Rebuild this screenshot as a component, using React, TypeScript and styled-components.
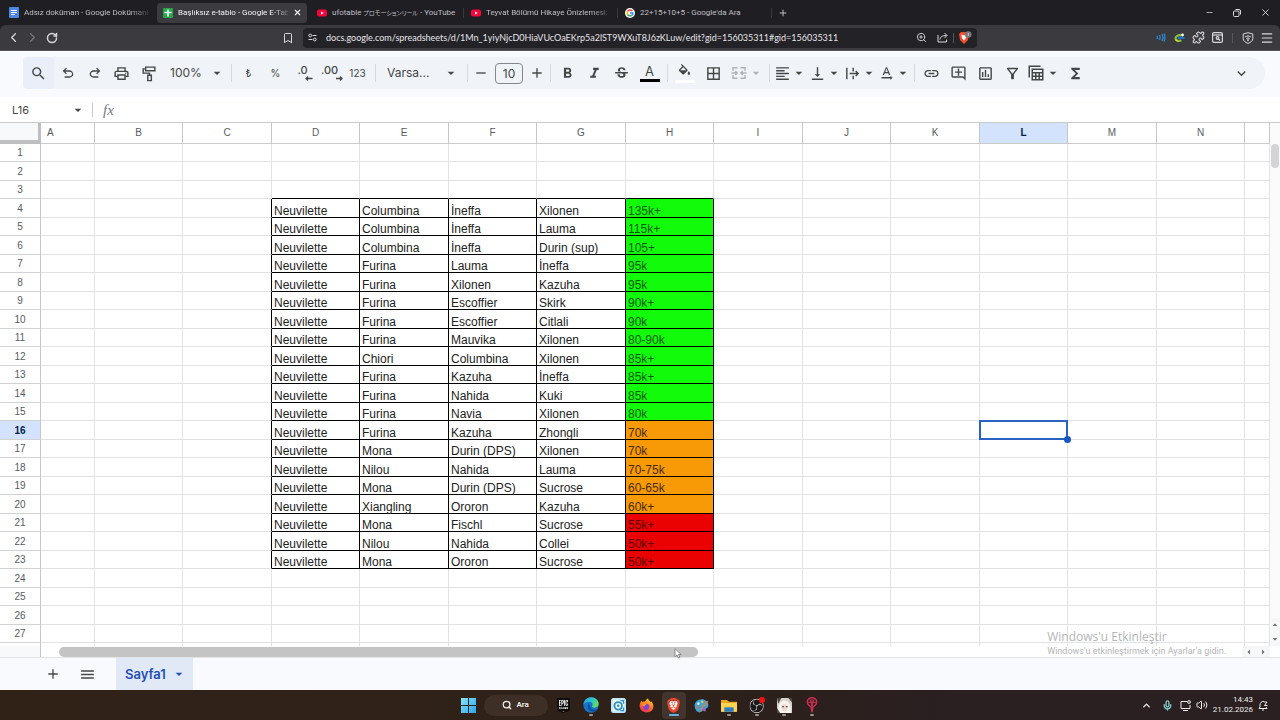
import React from "react";
import styled, { createGlobalStyle, css } from "styled-components";
import {
  MdAdd,
  MdArrowDropDown,
  MdArrowDropUp,
  MdArrowLeft,
  MdArrowRight,
  MdBorderAll,
  MdFormatAlignLeft,
  MdFormatBold,
  MdFormatItalic,
  MdFunctions,
  MdKeyboardArrowDown,
  MdLink,
  MdMenu,
  MdOutlineAddComment,
  MdOutlineFilterAlt,
  MdOutlineInsertChart,
  MdOutlinePrint,
  MdRemove,
  MdSearch,
  MdStrikethroughS,
  MdTextRotationNone,
  MdVerticalAlignBottom,
} from "react-icons/md";
import { SiBrave, SiEpicgames, SiObsstudio } from "react-icons/si";
import {
  Bookmark,
  ChevronLeft,
  ChevronRight,
  ChevronUp,
  Menu,
  Mic,
  Minus,
  Plus,
  Puzzle,
  RotateCw,
  Search,
  Volume2,
  X,
  ZoomIn,
} from "lucide-react";

const uiFont = `Roboto, "Noto Sans CJK JP", sans-serif`;
const docsFont = `Inter, Roboto, sans-serif`;
const cellFont = `"Liberation Sans", Arial, sans-serif`;

const Global = createGlobalStyle`
  * { box-sizing: border-box; }
  body { margin: 0; font-family: ${docsFont}; color: #444746; }
  button, input, select { font: inherit; color: inherit; border: 0; padding: 0; margin: 0; background: none; outline: none; }
  svg { display: block; flex: none; }
`;

const Page = styled.div`
  display: flex;
  flex-direction: column;
  height: 100vh;
  overflow: hidden;
  background: #fff;
`;

/* ---------- browser chrome ---------- */

const TabStrip = styled.header`
  display: flex;
  justify-content: space-between;
  height: 25px;
  padding-left: 3px;
  background: #1f1e23;
  color: #c9c8cc;
  font: 8px/14px ${uiFont};
`;

const TabList = styled.nav`
  display: flex;
  flex: 1;
  align-items: center;
  min-width: 0;
`;

const BrowserTab = styled.a<{ $active?: boolean }>`
  display: flex;
  align-items: center;
  gap: 5px;
  flex: 0 1 150px;
  min-width: 0;
  height: 20px;
  padding: 0 5px 0 6px;
  border-radius: 4px;
  color: ${(p) => (p.$active ? "#f4f3f6" : "#c0bfc4")};
  background: ${(p) => (p.$active ? "#3c3b40" : "transparent")};
  text-decoration: none;
`;

const TabTitle = styled.span<{ $fade?: boolean }>`
  flex: 1;
  min-width: 0;
  overflow: hidden;
  white-space: nowrap;
  ${(p) => p.$fade && css`mask-image: linear-gradient(90deg, #000 85%, #0003);`}
`;

const Kana = styled.span`
  font-size: 6px;
  font-feature-settings: "palt";
`;

const TabDivider = styled.i<{ $hidden?: boolean }>`
  width: 1px;
  height: 10px;
  margin: 0 1px 0 2px;
  background: ${(p) => (p.$hidden ? "transparent" : "#3a393e")};
`;

const ChromeButton = styled.button<{ $w?: number; $dim?: boolean }>`
  display: flex;
  align-items: center;
  justify-content: center;
  flex: none;
  width: ${(p) => p.$w ?? 19}px;
  height: 20px;
  color: ${(p) => (p.$dim ? "#77767b" : "#d9d8dc")};
`;

const WindowControls = styled.div`
  display: flex;
  align-items: center;
  padding-right: 1px;
`;

const BarShell = styled.div`
  background: #1f1e23;
`;

const AddressBar = styled.div`
  display: grid;
  grid-template-columns: 303px 1fr 303px;
  align-items: center;
  height: 26px;
  border-bottom: 1px solid #56555a;
  border-radius: 6px 6px 0 0;
  background: #3b3a3f;
`;

const NavGroup = styled.div`
  display: flex;
  align-items: center;
  padding: 0 6px 0 4px;
`;

const Push = styled.span`
  flex: 1;
`;

const UrlField = styled.label`
  display: flex;
  align-items: center;
  height: 20px;
  padding: 0 2px 0 5px;
  border-radius: 4px;
  background: #232227;
  color: #d9d8dc;
`;

const UrlInput = styled.input`
  flex: 1;
  min-width: 0;
  height: 20px;
  padding-left: 9px;
  font: 9px/14px Lato, Roboto, sans-serif;
  color: #e6e5e9;
`;

const ThinRule = styled.i<{ $m: number }>`
  width: 1px;
  height: 10px;
  margin: 0 ${(p) => p.$m}px;
  background: #57565b;
`;

const ExtensionGroup = styled.div`
  display: flex;
  align-items: center;
  justify-content: flex-end;
  padding-right: 4px;
`;

/* ---------- sheet toolbar ---------- */

const ToolbarBand = styled.div`
  padding: 6px 15px 8px 23px;
  background: #f8fafd;
`;

const Toolbar = styled.div`
  display: flex;
  align-items: center;
  height: 32px;
  border-radius: 16px;
  background: #f0f4f9;
  color: #444746;
  font-size: 12px;
  line-height: 16px;
`;

const ToolButton = styled.button<{ $w?: number; $lit?: boolean; $off?: boolean; $small?: boolean }>`
  display: flex;
  align-items: center;
  justify-content: center;
  flex: none;
  width: ${(p) => p.$w ?? 27}px;
  height: 32px;
  color: ${(p) => (p.$off ? "#b0b3b6" : "#444746")};
  ${(p) => p.$small && css`font-size: 10px;`}
  ${(p) =>
    p.$lit &&
    css`
      border-radius: 4px;
      background: #e9eef8;
    `}
`;

const ToolDivider = styled.i`
  width: 1px;
  height: 18px;
  margin: 0 3px;
  background: #d5d9de;
`;

const SelectBox = styled.label<{ $w: number; $end: number }>`
  display: flex;
  align-items: center;
  flex: none;
  width: ${(p) => p.$w}px;
  padding: 0 ${(p) => p.$end}px 0 8px;
`;

const ToolSelect = styled.select`
  flex: 1;
  min-width: 0;
  appearance: none;
`;

const SizeInput = styled.input`
  width: 28px;
  height: 21px;
  margin: 0 4px;
  border: 1px solid #85888b;
  border-radius: 4px;
  text-align: center;
`;

const DecimalMark = styled.span`
  display: flex;
  flex-direction: column;
  font-size: 11px;
  font-weight: 500;
  line-height: 11px;

  svg {
    align-self: flex-end;
    margin: 0 -5px 0 0;
  }
`;

const ColorMark = styled.span<{ $bar: string }>`
  display: flex;
  justify-content: center;
  width: 20px;
  padding-bottom: 1px;
  border-bottom: 3px solid ${(p) => p.$bar};
  font-size: 13px;
  line-height: 14px;
`;

const CollapseButton = styled(ToolButton)`
  margin: 0 10px 0 auto;
`;

const FormulaBar = styled.div`
  display: flex;
  align-items: center;
  height: 26px;
  border-bottom: 1px solid #c7c9cb;
  font-size: 11px;
  line-height: 14px;
`;

const NameBox = styled.label`
  display: flex;
  align-items: center;
  width: 90px;
  padding: 0 4px 0 12px;
`;

const NameInput = styled.input`
  flex: 1;
  min-width: 0;
`;

const FormulaRule = styled.i`
  width: 1px;
  height: 14px;
  margin: 0 10px 0 2px;
  background: #c7c9cb;
`;

const FormulaLabel = styled.label`
  display: flex;
  flex: 1;
  align-items: center;
  gap: 8px;
  color: #777b80;
  font: italic 15px/16px "Liberation Serif", serif;
`;

const FormulaInput = styled.input`
  flex: 1;
  font: 12px/16px ${cellFont};
`;

/* ---------- grid ---------- */

const SheetArea = styled.main`
  display: flex;
  flex: 1;
  min-height: 0;
`;

const GridViewport = styled.div`
  flex: 1;
  min-width: 0;
  overflow: hidden;
`;

const Grid = styled.table`
  width: 100%;
  table-layout: fixed;
  border-collapse: separate;
  border-spacing: 0;
  font: 12px/12px ${cellFont};
  color: #111;
`;

const Column = styled.col<{ $w?: number }>`
  width: ${(p) => (p.$w ? `${p.$w}px` : "auto")};
`;

const Corner = styled.td`
  padding: 0;
  border-right: 3px solid #bdbfc1;
  border-bottom: 4px solid #bdbfc1;
  background: #f8f9fa;
`;

const ColumnHead = styled.th<{ $selected?: boolean; $first?: boolean }>`
  height: 21px;
  padding: 0 0 0 ${(p) => (p.$first ? 6 : 0)}px;
  border-right: 1px solid #c4c6c8;
  border-bottom: 1px solid #c9cbcd;
  background: ${(p) => (p.$selected ? "#d3e3fd" : "#fff")};
  color: ${(p) => (p.$selected ? "#041e49" : "#575b5f")};
  font-size: 10px;
  font-weight: ${(p) => (p.$selected ? 700 : 400)};
  text-align: ${(p) => (p.$first ? "left" : "center")};
`;

const Row = styled.tr<{ $tall: boolean }>`
  height: ${(p) => (p.$tall ? 19 : 18)}px;
`;

const RowHead = styled.th<{ $selected?: boolean }>`
  padding: 1px 0 0;
  border-right: 1px solid #c4c6c8;
  border-bottom: 1px solid #d0d2d4;
  background: ${(p) => (p.$selected ? "#d3e3fd" : "#fff")};
  color: ${(p) => (p.$selected ? "#041e49" : "#575b5f")};
  font-size: 10px;
  font-weight: ${(p) => (p.$selected ? 700 : 400)};
`;

const Cell = styled.td<{ $fill?: string; $ink?: string; $right?: boolean; $bottom?: boolean; $anchor?: boolean }>`
  position: ${(p) => (p.$anchor ? "relative" : "static")};
  padding: 0 0 0 2px;
  border-right: 1px solid ${(p) => (p.$right ? "#000" : "#e1e2e3")};
  border-bottom: 1px solid ${(p) => (p.$bottom ? "#000" : "#e1e2e3")};
  background: ${(p) => p.$fill ?? "transparent"};
  color: ${(p) => p.$ink ?? "#222"};
  vertical-align: bottom;
  white-space: nowrap;
`;

const Selection = styled.span`
  position: absolute;
  inset: -1px;
  border: 2px solid #2a62c4;

  &::after {
    content: "";
    position: absolute;
    right: -5px;
    bottom: -5px;
    width: 7px;
    height: 7px;
    border-radius: 50%;
    background: #1a56c0;
  }
`;

const VerticalScroll = styled.div`
  display: flex;
  flex-direction: column;
  align-items: center;
  width: 10px;
  background: #fbfbfb;
`;

const VerticalThumb = styled.i`
  width: 8px;
  height: 24px;
  margin: 21px 0 auto;
  border-radius: 4px;
  background: #d3d4d6;
`;

const ScrollButton = styled.button<{ $w: number; $h: number }>`
  display: flex;
  align-items: center;
  justify-content: center;
  width: ${(p) => p.$w}px;
  height: ${(p) => p.$h}px;
  background: #f6f7f8;
  color: #6f7376;
`;

const HorizontalScroll = styled.div`
  position: relative;
  display: flex;
  align-items: center;
  height: 11px;
  padding-right: 10px;
`;

const ScrollGutter = styled.i`
  width: 41px;
  height: 11px;
  border-right: 1px solid #c4c6c8;
  background: #f8f9fa;
`;

const ScrollTrack = styled.div`
  flex: 1;
  padding-left: 18px;
`;

const HorizontalThumb = styled.div`
  position: relative;
  width: 54%;
  height: 10px;
  border-radius: 5px;
  background: #c4c4c4;
`;

const Pointer = styled.svg`
  position: absolute;
  right: 16px;
  top: 1px;
`;

const Watermark = styled.aside`
  position: absolute;
  right: 54px;
  bottom: 0;
  color: #b4b5b7;
  font: 9px/12px ${uiFont};
  white-space: nowrap;
  pointer-events: none;
`;

const WatermarkTitle = styled.p`
  margin: 0;
  font: 12px/17px "Open Sans", sans-serif;
`;

const WatermarkText = styled.p`
  margin: 0;
`;

/* ---------- sheet tabs ---------- */

const SheetBar = styled.footer`
  display: flex;
  align-items: center;
  height: 33px;
  padding-left: 36px;
  border-top: 1px solid #e2e4e7;
  background: #f8fafd;
`;

const SheetBarButton = styled.button`
  display: flex;
  align-items: center;
  justify-content: center;
  width: 34px;
  height: 32px;
  color: #444746;
`;

const SheetTab = styled.button`
  display: flex;
  align-items: center;
  gap: 5px;
  height: 32px;
  margin-left: 12px;
  padding: 0 6px 0 9px;
  background: #e1e9f7;
  color: #2150b4;
  font-size: 13px;
  font-weight: 600;
`;

/* ---------- taskbar ---------- */

const Taskbar = styled.div`
  display: grid;
  grid-template-columns: 1fr 368px 1fr;
  align-items: center;
  height: 30px;
  background: linear-gradient(90deg, #302217, #2e2119 50%, #2a1f21 75%);
  color: #f1eeec;
  font: 8px/10px ${uiFont};
`;

const AppRow = styled.nav`
  grid-column: 2;
  display: flex;
  justify-content: space-between;
`;

const AppButton = styled.button<{ $mark?: "open" | "active" }>`
  display: flex;
  flex-direction: column;
  align-items: center;
  justify-content: center;
  gap: 1px;
  width: 24px;
  height: 27px;
  padding-top: 3px;
  border-radius: 4px;
  background: ${(p) => (p.$mark === "active" ? "#43352e" : "transparent")};

  &::after {
    content: "";
    width: ${(p) => (p.$mark === "active" ? 10 : 4)}px;
    height: 2px;
    border-radius: 1px;
    background: ${(p) => (p.$mark === "active" ? "#62b4e8" : p.$mark === "open" ? "#9c928c" : "transparent")};
  }
`;

const SearchPill = styled.button`
  display: flex;
  align-items: center;
  justify-content: center;
  gap: 4px;
  width: 64px;
  height: 21px;
  margin-top: 3px;
  border-radius: 11px;
  background: #3d2f26;
  font-weight: 600;
`;

const Tray = styled.div`
  display: flex;
  align-items: center;
  justify-content: flex-end;
  padding-right: 8px;
`;

const TrayButton = styled.button<{ $w: number; $tint?: string }>`
  display: flex;
  align-items: center;
  justify-content: center;
  width: ${(p) => p.$w}px;
  height: 24px;
  color: ${(p) => p.$tint ?? "#efecec"};
`;

const Clock = styled.div`
  display: flex;
  flex-direction: column;
  width: 44px;
  text-align: right;
  white-space: nowrap;
`;

/* ---------- drawings ---------- */

const SymbolIcon = ({ d, size = 16 }: { d: string; size?: number }) => (
  <svg width={size} height={size} viewBox="0 -960 960 960" fill="currentColor">
    <path d={d} />
  </svg>
);

const undoPath =
  "M280-200v-80h284q63 0 109.5-40T720-420q0-60-46.5-100T564-560H312l104 104-56 56-200-200 200-200 56 56-104 104h252q97 0 157.5 63T800-420q0 94-69.5 157T564-200H280Z";
const redoPath =
  "M396-200q-97 0-166.5-63T160-420q0-94 69.5-157T396-640h252L544-744l56-56 200 200-200 200-56-56 104-104H396q-63 0-109.5 40T240-420q0 60 46.5 100T396-280h284v80H396Z";

const LineIcon = ({ size = 17, w = 2, children }: { size?: number; w?: number; children: React.ReactNode }) => (
  <svg width={size} height={size} viewBox="0 0 24 24" fill="none" stroke="currentColor" strokeWidth={w}>
    {children}
  </svg>
);

const RollerIcon = () => (
  <LineIcon>
    <path d="M8 3h13v5H8zM8 5.500H4.500V11.500H13.500V14.500M11 14.500h5V22h-5z" />
  </LineIcon>
);

const FillIcon = () => (
  <svg width="15" height="15" viewBox="0 0 24 24" fill="currentColor">
    <path d="M16.560 8.940 7.620 0 6.210 1.410l2.380 2.380-5.150 5.150a1.490 1.490 0 0 0 0 2.120l5.500 5.500c.29.290.680.440 1.060.440s.770-.150 1.060-.440l5.500-5.500c.590-.580.590-1.530 0-2.120zM5.210 10 10 5.210 14.790 10zM19 11.500s-2 2.170-2 3.500c0 1.100.9 2 2 2s2-.9 2-2c0-1.330-2-3.500-2-3.500z" />
  </svg>
);

const MergeIcon = () => (
  <LineIcon size={18}>
    <path d="M10 5H4v4M4 15v4h6M14 5h6v4M20 15v4h-6M2 12h7M22 12h-7M7 9.500 9.500 12 7 14.500M17 9.500 14.500 12 17 14.500" />
  </LineIcon>
);

const WrapIcon = () => (
  <LineIcon>
    <path d="M4 4v16M13 4v5M13 15v5M8 12h12M16.500 8.500 20 12 16.500 15.500" />
  </LineIcon>
);

const TableViewsIcon = () => (
  <LineIcon size={18}>
    <path d="M3 18V3h15M7 7h14v14H7zM7 11.500h14M7 16.200h14M11.700 11.500V21M16.300 11.500V21" />
  </LineIcon>
);

const SmallArrow = ({ flip }: { flip?: boolean }) => (
  <svg width="8" height="5" viewBox="0 0 8 5" fill="none" stroke="currentColor" strokeWidth="1.300">
    <path d={flip ? "M1 2.500h6M5 .5 7 2.500 5 4.500" : "M7.500 2.500H1M3 .5 1 2.500 3 4.500"} />
  </svg>
);

const DocsFavicon = () => (
  <svg width="10" height="11" viewBox="0 0 10 11">
    <rect width="10" height="11" rx="1" fill="#4a86e8" />
    <path d="M2 3.500h6M2 5.500h6M2 7.500h4" stroke="#fff" />
  </svg>
);

const SheetsFavicon = () => (
  <svg width="10" height="10" viewBox="0 0 10 10">
    <rect width="10" height="10" rx="1" fill="#2ba24c" />
    <path d="M5 1.500v7M1.500 4.500h7" stroke="#fff" strokeWidth="1.500" />
  </svg>
);

const YoutubeFavicon = () => (
  <svg width="10" height="10" viewBox="0 0 10 10">
    <rect y="1.500" width="10" height="7" rx="2" fill="#f4063d" />
    <path d="M4 3.500 6.800 5 4 6.500z" fill="#fff" />
  </svg>
);

const GoogleFavicon = () => (
  <svg width="10" height="10" viewBox="0 0 20 20">
    <circle cx="10" cy="10" r="10" fill="#fff" />
    <g fill="none" strokeWidth="3">
      <path d="M14.200 6A5.800 5.800 0 0 0 5 7" stroke="#ea4335" />
      <path d="M5 7a5.800 5.800 0 0 0 0 6" stroke="#fbbc05" />
      <path d="M5 13a5.800 5.800 0 0 0 8.500 1.600" stroke="#34a853" />
      <path d="M13.500 14.600A5.800 5.800 0 0 0 15.800 10H10" stroke="#4285f4" />
    </g>
  </svg>
);

const TuneIcon = () => (
  <svg width="9" height="9" viewBox="0 0 9 9" fill="none" stroke="currentColor">
    <circle cx="2.200" cy="2.500" r="1.400" />
    <circle cx="6.800" cy="6.500" r="1.400" />
    <path d="M4.500 2.500H8.500M.5 6.500h4" />
  </svg>
);

const RestoreIcon = () => (
  <svg width="8" height="8" viewBox="0 0 8 8" fill="none" stroke="currentColor">
    <rect x=".5" y="2" width="5.500" height="5.500" rx="1" />
    <path d="M2.500.5H6A1.500 1.500 0 0 1 7.500 2v3.500" />
  </svg>
);

const ShareIcon = () => (
  <svg width="11" height="11" viewBox="0 0 11 11" fill="none" stroke="currentColor">
    <path d="M1 3v7h8.500V7.500M3 7.500C3.300 5 5 3.500 9.500 3.500M7.500 1l2.500 2.500L7.500 6" />
  </svg>
);

const BraveMark = ({ size }: { size: number }) => (
  <svg width={size} height={size} viewBox="0 0 24 24">
    <path d="M6 5h12l1 6-3 6-4 4-4-4-3-6z" fill="#fff" />
    <SiBrave size={24} color="#f1452a" />
  </svg>
);

const BraveShieldIcon = () => (
  <svg width="14" height="13" viewBox="0 0 14 13">
    <path d="M3 1h6l2 2-1 6-4 4-4-4-1-6z" fill="#f0502f" />
    <path d="M3.500 3.500 6 4.500l2.500-1L8 7 6 9.500 4 7z" fill="#fff" />
    <circle cx="10.300" cy="3.500" r="3.300" fill="#77767c" />
    <path d="M10.300 2v3" stroke="#ddd" strokeWidth=".8" />
  </svg>
);

const WavesIcon = () => (
  <svg width="10" height="9" viewBox="0 0 10 9" fill="none" stroke="#2b8fe0" strokeWidth="1.200">
    <path d="M1 3q.7 1.500 0 3M3.500 2q1.300 2.500 0 5M6 1q2 3.500 0 7M8 .5q2 4 0 8" />
  </svg>
);

const DownloadExtIcon = () => (
  <svg width="11" height="10" viewBox="0 0 11 10">
    <path d="M7.500 2.500C4 1.500 1.500 3.500 1.500 5.500S4 8.500 7.500 7.500" fill="none" stroke="#7cc43a" strokeWidth="2.200" />
    <path d="M4 5h6.500" stroke="#1f6fd0" strokeWidth="2" />
    <circle cx="8.500" cy="2" r="1.400" fill="#fff" />
    <path d="M1.500 6.500 4 8.500" stroke="#f2c522" strokeWidth="1.500" />
  </svg>
);

const WalletIcon = () => (
  <svg width="11" height="11" viewBox="0 0 11 11" fill="none" stroke="currentColor" strokeWidth="1.200">
    <rect x=".6" y=".6" width="9.800" height="9.800" rx="1.500" />
    <path d="M.6 3h9.800" />
    <circle cx="5.500" cy="6" r="1.300" />
    <path d="M6.500 7 8 8.500" />
  </svg>
);

const ShieldWifiIcon = () => (
  <svg width="12" height="12" viewBox="0 0 12 12" fill="none" stroke="currentColor">
    <path d="M6 .7 10.800 2v4.500C10.800 9 8.500 10.500 6 11.400 3.500 10.500 1.200 9 1.200 6.500V2z" />
    <path d="M3.200 4.800Q6 2.800 8.800 4.800M4.300 6.500Q6 5.200 7.700 6.500" />
    <circle cx="6" cy="8" r=".6" fill="currentColor" />
  </svg>
);

const WindowsIcon = () => (
  <svg width="15" height="15" viewBox="0 0 15 15">
    <defs>
      <linearGradient id="win" x1="0" y1="0" x2="1" y2="1">
        <stop stopColor="#8be3fb" />
        <stop offset="1" stopColor="#24a5ea" />
      </linearGradient>
    </defs>
    <path d="M0 0h7v7H0zM8 0h7v7H8zM0 8h7v7H0zM8 8h7v7H8z" fill="url(#win)" />
  </svg>
);

const EpicIcon = () => (
  <svg width="15" height="15" viewBox="0 0 24 24">
    <path d="M4 2h16v15l-8 5-8-5z" fill="#fff" />
    <SiEpicgames size={24} color="#0e0d0d" />
  </svg>
);

const EdgeIcon = () => (
  <svg width="16" height="16" viewBox="0 0 24 24">
    <defs>
      <linearGradient id="edgeTop" x1="0" y1="0" x2="1" y2=".4">
        <stop stopColor="#2aa6e8" />
        <stop offset=".6" stopColor="#2fc5c8" />
        <stop offset="1" stopColor="#63dd5a" />
      </linearGradient>
    </defs>
    <circle cx="12" cy="12" r="11.500" fill="#1673c9" />
    <path d="M.7 11.500C1.500 4.800 6.300.5 12.300.5 19 .5 23.500 5.500 23.500 10.200c0 3.600-2.800 5.800-6 5.800-2.300 0-4-.8-4-1.800 0-.8 1-1.200 1-3 0-2.200-2.500-4-5.500-4-4 0-7 2-8.300 4.300z" fill="url(#edgeTop)" />
    <path d="M9 10c-3 2-3 9 3 11.500 4 1.500 8-.5 10-4-5 3-12 1-12-5z" fill="#0c4f9e" />
  </svg>
);

const GearFaceIcon = () => (
  <svg width="15" height="15" viewBox="0 0 24 24">
    <rect width="24" height="24" rx="4" fill="#bfe6fa" />
    <path d="M3 3h18v18H3z" fill="#f2f8dc" />
    <circle cx="11.500" cy="12.500" r="6" fill="none" stroke="#2a8fd6" strokeWidth="3" />
    <circle cx="11.500" cy="12.500" r="2" fill="#2a8fd6" />
    <path d="M15 4h5v5M20 15v5h-5" fill="none" stroke="#2a8fd6" strokeWidth="2" />
  </svg>
);

const FirefoxIcon = () => (
  <svg width="15" height="15" viewBox="0 0 24 24">
    <defs>
      <linearGradient id="fox" x1=".8" y1="0" x2=".3" y2="1">
        <stop stopColor="#ffd43a" />
        <stop offset=".5" stopColor="#ff7a1f" />
        <stop offset="1" stopColor="#f0304e" />
      </linearGradient>
    </defs>
    <path d="M12 23C5.500 23 1 18.500 1 12.500 1 9 2.500 6 4.500 4c0 1 .5 2 1 2.500C7 5.500 8.500 5.500 9.500 6 11 3 13 1.500 14.500.5c0 3 2.500 4 4 6L19.500 5C22 7.500 23 10 23 13c0 5.500-4.500 10-11 10z" fill="url(#fox)" />
    <circle cx="11.500" cy="14" r="5" fill="#8042d8" />
    <path d="M5 9c3-1 5 0 7 1.500-2 .5-3 1.500-3 3-2 0-4-2-4-4.500z" fill="#ff9a25" />
  </svg>
);

const PaintIcon = () => (
  <svg width="15" height="15" viewBox="0 0 24 24">
    <path d="M12 2C6 2 1 6.500 1 12.500S5 23 9 23c3 0 2-4 5-5 4-1 9-1 9-7 0-5-5-9-11-9z" fill="#3ba5d8" />
    <circle cx="7" cy="9" r="2" fill="#f4f4f4" />
    <circle cx="13" cy="6" r="2" fill="#f6c945" />
    <circle cx="6" cy="15" r="2" fill="#e7633c" />
    <path d="M13 12 21 4l2 2-7 9-3 7-3-1z" fill="#b98a62" />
    <path d="M15 14c4 1 5 4 3 8l-5-3z" fill="#8b6fd0" />
  </svg>
);

const FolderIcon = () => (
  <svg width="16" height="15" viewBox="0 0 24 24" preserveAspectRatio="none">
    <path d="M0 3h9l3 3h12v16H0z" fill="#e9a820" />
    <path d="M0 8h24v14H0z" fill="#fcd354" />
    <path d="M5 15h14v7H5z" fill="#2b7cc4" />
  </svg>
);

const ObsIcon = () => (
  <svg width="16" height="16" viewBox="0 0 26 26">
    <circle cx="12" cy="14" r="11" fill="#1c1a1b" />
    <SiObsstudio size={23} x={1} y={3} color="#dedbda" />
    <circle cx="21" cy="5" r="5" fill="#f01313" />
  </svg>
);

const PortraitIcon = () => (
  <svg width="15" height="15" viewBox="0 0 24 24">
    <rect width="24" height="24" fill="#d8d2cc" />
    <path d="M2 24C1 12 5 4 12 4s11 8 10 20z" fill="#f7f3ef" />
    <path d="M7 12q5-4 10 0l-1 7q-4 4-8 0z" fill="#efd9cc" />
    <path d="M8 14h3M14 14h3" stroke="#3c3634" strokeWidth="1.800" />
    <path d="M0 24V16l5 8zM18 0h6v7zM0 0h7L2 9z" fill="#4a433f" />
  </svg>
);

const PinIcon = () => (
  <svg width="16" height="16" viewBox="0 0 24 24" fill="none" stroke="#d22f55" strokeWidth="2">
    <path d="M12 23 10.500 15C6 12 4.500 9 5 6c1-3 4-5 7-5s6 2 7 5c.5 3-1 6-5.500 9z" />
    <path d="M12 1v20M8.500 3 13 14M15.500 3 11 14M5 8h14" strokeWidth="1.400" />
  </svg>
);

const DisplayIcon = () => (
  <svg width="11" height="11" viewBox="0 0 11 11" fill="none" stroke="currentColor">
    <path d="M7 1.500H1v7h9V5M3 10.500h5" />
    <circle cx="9" cy="2" r="1.400" />
  </svg>
);

const BellIcon = () => (
  <svg width="10" height="11" viewBox="0 0 10 11" fill="none" stroke="currentColor">
    <path d="M6 1.500C3.500 1 2 3 2 5v2L1 8.500h8L8 7M4 10h2" />
    <path d="M6 2h3L6.500 5.500H9.500" />
  </svg>
);

/* ---------- data ---------- */

const columns: { name: string; width?: number }[] = [
  { name: "A", width: 54 },
  { name: "B", width: 88 },
  { name: "C", width: 89 },
  { name: "D", width: 88 },
  { name: "E", width: 89 },
  { name: "F", width: 88 },
  { name: "G", width: 89 },
  { name: "H", width: 88 },
  { name: "I", width: 89 },
  { name: "J", width: 88 },
  { name: "K", width: 89 },
  { name: "L", width: 88 },
  { name: "M", width: 89 },
  { name: "N", width: 88 },
  { name: "" },
];

const firstDataRow = 4;
const teams = `Columbina|İneffa|Xilonen|135k+
Columbina|İneffa|Lauma|115k+
Columbina|İneffa|Durin (sup)|105+
Furina|Lauma|İneffa|95k
Furina|Xilonen|Kazuha|95k
Furina|Escoffier|Skirk|90k+
Furina|Escoffier|Citlali|90k
Furina|Mauvika|Xilonen|80-90k
Chiori|Columbina|Xilonen|85k+
Furina|Kazuha|İneffa|85k+
Furina|Nahida|Kuki|85k
Furina|Navia|Xilonen|80k
Furina|Kazuha|Zhongli|70k
Mona|Durin (DPS)|Xilonen|70k
Nilou|Nahida|Lauma|70-75k
Mona|Durin (DPS)|Sucrose|60-65k
Xiangling|Ororon|Kazuha|60k+
Mona|Fischl|Sucrose|55k+
Nilou|Nahida|Collei|50k+
Mona|Ororon|Sucrose|50k+`
  .split("\n")
  .map((line) => ["Neuvilette", ...line.split("|")]);

const tierOf = (i: number) =>
  i < 12
    ? { fill: "#12fb0a", ink: "#0b5a08" }
    : i < 17
      ? { fill: "#f79a06", ink: "#4a2c02" }
      : { fill: "#ea0202", ink: "#600202" };

const rowNumbers = Array.from({ length: 27 }, (_, i) => i + 1);

const SheetRow = ({ n }: { n: number }) => {
  const index = n - firstDataRow;
  const team = teams[index];
  return (
    <Row $tall={n % 2 === 0}>
      <RowHead scope="row" $selected={n === 16}>
        {n}
      </RowHead>
      {columns.map((c, x) => {
        const inBlock = x >= 3 && x <= 7;
        const tier = team && x === 7 ? tierOf(index) : undefined;
        const selected = n === 16 && c.name === "L";
        return (
          <Cell
            key={x}
            $fill={tier?.fill}
            $ink={tier?.ink}
            $right={!!team && x >= 2 && x <= 7}
            $bottom={inBlock && (!!team || n === firstDataRow - 1)}
            $anchor={selected}
          >
            {team && inBlock ? team[x - 3] : null}
            {selected ? <Selection /> : null}
          </Cell>
        );
      })}
    </Row>
  );
};

const Caret = () => <MdArrowDropDown size={16} />;

const DropTool = ({ label, off, w = 35, children }: { label: string; off?: boolean; w?: number; children: React.ReactNode }) => (
  <ToolButton $w={w} $off={off} aria-label={label}>
    {children}
    <MdArrowDropDown size={16} />
  </ToolButton>
);

export default function App() {
  return (
    <Page>
      <Global />
      <TabStrip>
        <TabList>
          <BrowserTab href="#docs">
            <DocsFavicon />
            <TabTitle $fade>Adsız doküman - Google Dokümanla</TabTitle>
          </BrowserTab>
          <TabDivider $hidden />
          <BrowserTab href="#sheet" $active>
            <SheetsFavicon />
            <TabTitle $fade>Başlıksız e-tablo - Google E-Tabl</TabTitle>
            <X size={9} strokeWidth={3} />
          </BrowserTab>
          <TabDivider $hidden />
          <BrowserTab href="#reel">
            <YoutubeFavicon />
            <TabTitle>
              ufotable <Kana lang="ja">プロモーションリール</Kana> - YouTube
            </TabTitle>
          </BrowserTab>
          <TabDivider />
          <BrowserTab href="#teyvat">
            <YoutubeFavicon />
            <TabTitle $fade>Teyvat Bölümü Hikaye Önizlemesi: Ay</TabTitle>
          </BrowserTab>
          <TabDivider />
          <BrowserTab href="#search">
            <GoogleFavicon />
            <TabTitle>22+15+10+5 - Google'da Ara</TabTitle>
          </BrowserTab>
          <TabDivider />
          <ChromeButton aria-label="Yeni sekme">
            <Plus size={10} />
          </ChromeButton>
        </TabList>
        <WindowControls>
          <ChromeButton $w={28} aria-label="Simge durumuna küçült">
            <Minus size={9} />
          </ChromeButton>
          <ChromeButton $w={28} aria-label="Geri yükle">
            <RestoreIcon />
          </ChromeButton>
          <ChromeButton $w={28} aria-label="Kapat">
            <X size={11} />
          </ChromeButton>
        </WindowControls>
      </TabStrip>

      <BarShell>
        <AddressBar>
          <NavGroup>
            <ChromeButton aria-label="Geri">
              <ChevronLeft size={15} />
            </ChromeButton>
            <ChromeButton $dim aria-label="İleri">
              <ChevronRight size={15} />
            </ChromeButton>
            <ChromeButton aria-label="Yenile">
              <RotateCw size={12} strokeWidth={3} />
            </ChromeButton>
            <Push />
            <ChromeButton aria-label="Yer işareti">
              <Bookmark size={12} />
            </ChromeButton>
          </NavGroup>
          <UrlField>
            <TuneIcon />
            <UrlInput
              aria-label="Adres"
              defaultValue="docs.google.com/spreadsheets/d/1Mn_1yiyNjcD0HiaVUcOaEKrp5a2lST9WXuT8J6zKLuw/edit?gid=156035311#gid=156035311"
            />
            <ChromeButton $w={22} aria-label="Yakınlaştır">
              <ZoomIn size={11} />
            </ChromeButton>
            <ChromeButton $w={20} aria-label="Paylaş">
              <ShareIcon />
            </ChromeButton>
            <ThinRule $m={1} />
            <ChromeButton $w={20} aria-label="Brave Shields">
              <BraveShieldIcon />
            </ChromeButton>
          </UrlField>
          <ExtensionGroup>
            <ChromeButton aria-label="Ses">
              <WavesIcon />
            </ChromeButton>
            <ChromeButton aria-label="İndirme yöneticisi">
              <DownloadExtIcon />
            </ChromeButton>
            <ChromeButton aria-label="Uzantılar">
              <Puzzle size={13} />
            </ChromeButton>
            <ChromeButton aria-label="Cüzdan">
              <WalletIcon />
            </ChromeButton>
            <ThinRule $m={5} />
            <ChromeButton aria-label="VPN">
              <ShieldWifiIcon />
            </ChromeButton>
            <ChromeButton aria-label="Menü">
              <Menu size={14} />
            </ChromeButton>
          </ExtensionGroup>
        </AddressBar>
      </BarShell>

      <ToolbarBand>
        <Toolbar role="toolbar">
          <ToolButton $w={31} $lit aria-label="Ara">
            <MdSearch size={17} />
          </ToolButton>
          <ToolButton aria-label="Geri al">
            <SymbolIcon d={undoPath} />
          </ToolButton>
          <ToolButton aria-label="Yinele">
            <SymbolIcon d={redoPath} />
          </ToolButton>
          <ToolButton aria-label="Yazdır">
            <MdOutlinePrint size={17} />
          </ToolButton>
          <ToolButton aria-label="Biçimi boya">
            <RollerIcon />
          </ToolButton>
          <SelectBox $w={66} $end={3}>
            <ToolSelect aria-label="Yakınlaştırma">
              <option>100%</option>
            </ToolSelect>
            <Caret />
          </SelectBox>
          <ToolDivider />
          <ToolButton $small aria-label="Para birimi">₺</ToolButton>
          <ToolButton $small aria-label="Yüzde">%</ToolButton>
          <ToolButton aria-label="Ondalık azalt">
            <DecimalMark>
              .0
              <SmallArrow />
            </DecimalMark>
          </ToolButton>
          <ToolButton aria-label="Ondalık artır">
            <DecimalMark>
              .00
              <SmallArrow flip />
            </DecimalMark>
          </ToolButton>
          <ToolButton $w={29} $small>123</ToolButton>
          <ToolDivider />
          <SelectBox $w={85} $end={5}>
            <ToolSelect aria-label="Yazı tipi">
              <option>Varsa...</option>
            </ToolSelect>
            <Caret />
          </SelectBox>
          <ToolDivider />
          <ToolButton $w={20} aria-label="Küçült">
            <MdRemove size={16} />
          </ToolButton>
          <SizeInput aria-label="Yazı tipi boyutu" defaultValue="10" />
          <ToolButton $w={20} aria-label="Büyüt">
            <MdAdd size={16} />
          </ToolButton>
          <ToolDivider />
          <ToolButton aria-label="Kalın">
            <MdFormatBold size={17} />
          </ToolButton>
          <ToolButton aria-label="İtalik">
            <MdFormatItalic size={17} />
          </ToolButton>
          <ToolButton aria-label="Üstü çizili">
            <MdStrikethroughS size={17} />
          </ToolButton>
          <ToolButton $w={29} aria-label="Metin rengi">
            <ColorMark $bar="#000">A</ColorMark>
          </ToolButton>
          <ToolDivider />
          <ToolButton aria-label="Dolgu rengi">
            <ColorMark $bar="#fff">
              <FillIcon />
            </ColorMark>
          </ToolButton>
          <ToolButton $w={30} aria-label="Kenarlıklar">
            <MdBorderAll size={17} />
          </ToolButton>
          <DropTool label="Hücreleri birleştir" off w={38}>
            <MergeIcon />
          </DropTool>
          <ToolDivider />
          <DropTool label="Yatay hizala">
            <MdFormatAlignLeft size={17} />
          </DropTool>
          <DropTool label="Dikey hizala">
            <MdVerticalAlignBottom size={17} />
          </DropTool>
          <DropTool label="Metin kaydırma">
            <WrapIcon />
          </DropTool>
          <DropTool label="Metin döndürme" w={33}>
            <MdTextRotationNone size={17} />
          </DropTool>
          <ToolDivider />
          <ToolButton aria-label="Bağlantı ekle">
            <MdLink size={17} />
          </ToolButton>
          <ToolButton aria-label="Yorum ekle">
            <MdOutlineAddComment size={17} />
          </ToolButton>
          <ToolButton aria-label="Grafik ekle">
            <MdOutlineInsertChart size={17} />
          </ToolButton>
          <ToolButton aria-label="Filtre oluştur">
            <MdOutlineFilterAlt size={17} />
          </ToolButton>
          <DropTool label="Tablo görünümleri">
            <TableViewsIcon />
          </DropTool>
          <ToolButton $w={29} aria-label="İşlevler">
            <MdFunctions size={17} />
          </ToolButton>
          <CollapseButton aria-label="Menüleri gizle">
            <MdKeyboardArrowDown size={17} />
          </CollapseButton>
        </Toolbar>
      </ToolbarBand>

      <FormulaBar>
        <NameBox>
          <NameInput aria-label="Ad kutusu" defaultValue="L16" />
          <Caret />
        </NameBox>
        <FormulaRule />
        <FormulaLabel>
          fx
          <FormulaInput aria-label="Formül" />
        </FormulaLabel>
      </FormulaBar>

      <SheetArea>
        <GridViewport>
          <Grid>
            <colgroup>
              <Column $w={41} />
              {columns.map((c, i) => (
                <Column key={i} $w={c.width} />
              ))}
            </colgroup>
            <thead>
              <tr>
                <Corner />
                {columns.map((c, i) => (
                  <ColumnHead key={i} scope="col" $first={i === 0} $selected={c.name === "L"}>
                    {c.name}
                  </ColumnHead>
                ))}
              </tr>
            </thead>
            <tbody>
              {rowNumbers.map((n) => (
                <SheetRow key={n} n={n} />
              ))}
              <Row $tall>
                <RowHead />
                {columns.map((_, i) => (
                  <Cell key={i} />
                ))}
              </Row>
            </tbody>
          </Grid>
        </GridViewport>
        <VerticalScroll>
          <VerticalThumb />
          <ScrollButton $w={9} $h={14} aria-label="Yukarı kaydır">
            <MdArrowDropUp size={12} />
          </ScrollButton>
          <ScrollButton $w={9} $h={14} aria-label="Aşağı kaydır">
            <MdArrowDropDown size={12} />
          </ScrollButton>
        </VerticalScroll>
      </SheetArea>

      <HorizontalScroll>
        <ScrollGutter />
        <ScrollTrack>
          <HorizontalThumb>
            <Pointer width="8" height="11" viewBox="0 0 8 11">
              <path d="M1 .7v8l2-1.700L4.300 10l1.500-.7L4.500 6.500h2.700z" fill="#fff" stroke="#777" strokeWidth=".8" />
            </Pointer>
          </HorizontalThumb>
        </ScrollTrack>
        <ScrollButton $w={14} $h={11} aria-label="Sola kaydır">
          <MdArrowLeft size={12} />
        </ScrollButton>
        <ScrollButton $w={14} $h={11} aria-label="Sağa kaydır">
          <MdArrowRight size={12} />
        </ScrollButton>
        <Watermark>
          <WatermarkTitle>Windows'u Etkinleştir</WatermarkTitle>
          <WatermarkText>Windows'u etkinleştirmek için Ayarlar'a gidin.</WatermarkText>
        </Watermark>
      </HorizontalScroll>

      <SheetBar>
        <SheetBarButton aria-label="Sayfa ekle">
          <MdAdd size={16} />
        </SheetBarButton>
        <SheetBarButton aria-label="Tüm sayfalar">
          <MdMenu size={17} />
        </SheetBarButton>
        <SheetTab>
          Sayfa1
          <Caret />
        </SheetTab>
      </SheetBar>

      <Taskbar>
        <AppRow>
          <AppButton aria-label="Başlat">
            <WindowsIcon />
          </AppButton>
          <SearchPill>
            <Search size={10} strokeWidth={3} />
            Ara
          </SearchPill>
          <AppButton aria-label="Epic Games">
            <EpicIcon />
          </AppButton>
          <AppButton $mark="open" aria-label="Edge">
            <EdgeIcon />
          </AppButton>
          <AppButton aria-label="Araç">
            <GearFaceIcon />
          </AppButton>
          <AppButton aria-label="Firefox">
            <FirefoxIcon />
          </AppButton>
          <AppButton $mark="active" aria-label="Brave">
            <BraveMark size={15} />
          </AppButton>
          <AppButton aria-label="Paint">
            <PaintIcon />
          </AppButton>
          <AppButton $mark="open" aria-label="Dosya Gezgini">
            <FolderIcon />
          </AppButton>
          <AppButton $mark="open" aria-label="OBS">
            <ObsIcon />
          </AppButton>
          <AppButton $mark="open" aria-label="Oyun">
            <PortraitIcon />
          </AppButton>
          <AppButton $mark="open" aria-label="Konum">
            <PinIcon />
          </AppButton>
        </AppRow>
        <Tray>
          <TrayButton $w={21} aria-label="Gizli simgeler">
            <ChevronUp size={11} strokeWidth={3} />
          </TrayButton>
          <TrayButton $w={20} $tint="#7fc4c4" aria-label="Mikrofon">
            <Mic size={11} strokeWidth={3} />
          </TrayButton>
          <TrayButton $w={17} aria-label="Ağ">
            <DisplayIcon />
          </TrayButton>
          <TrayButton $w={15} aria-label="Ses">
            <Volume2 size={12} />
          </TrayButton>
          <Clock>
            <time>14:43</time>
            <time>21.02.2026</time>
          </Clock>
          <TrayButton $w={19} aria-label="Bildirimler">
            <BellIcon />
          </TrayButton>
        </Tray>
      </Taskbar>
    </Page>
  );
}
